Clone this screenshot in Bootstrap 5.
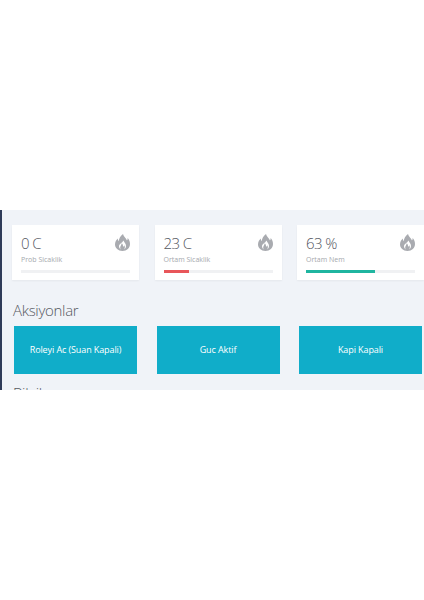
<!DOCTYPE html>
<html lang="tr">
<head>
    <meta charset="UTF-8">
    <meta name="viewport" content="width=device-width, initial-scale=1.0">
    <title>Aksiyonlar</title>
    <link href="https://cdn.jsdelivr.net/npm/bootstrap@5.3.0/dist/css/bootstrap.min.css" rel="stylesheet">
    <style>
        body {
            background: #fff;
            font-family: "Open Sans", "Liberation Sans", sans-serif;
            overflow: hidden;
        }

        .shot-panel {
            margin-top: 210px;
            height: 180px;
            overflow: hidden;
            background: #f0f3f8;
            border-left: 2px solid #2f3b59;
            padding: 15px 0 0 10px;
        }

        .stat-row {
            display: grid;
            grid-template-columns: repeat(3, 127px);
            column-gap: 15.5px;
        }

        .stat-box {
            height: 55px;
            background: #fff;
            padding: 8px 9px 0;
            box-shadow: 0 1px 2px rgba(0, 0, 0, .05);
        }

        .stat-value {
            font-size: 15px;
            font-weight: 300;
            line-height: 20px;
            letter-spacing: -.6px;
            color: #55585f;
        }

        .stat-name {
            font-size: 7px;
            line-height: 10px;
            margin-top: 2px;
            color: #a5a8ad;
        }

        .stat-flame {
            width: 15px;
            height: 17px;
            fill: #a9abb0;
            margin-top: 1px;
        }

        .stat-track {
            height: 3px;
            margin-top: 5px;
            border-radius: 0;
            background: #f0f1f3;
        }

        .fill-red { background: #e8565a; }
        .fill-green { background: #1fb5a0; }

        .block-title {
            font-size: 15px;
            font-weight: 300;
            line-height: 22px;
            letter-spacing: -.3px;
            color: #55585f;
            margin: 0;
        }

        .action-title {
            margin: 19px 0 0 1px;
        }

        .action-row {
            display: grid;
            grid-template-columns: repeat(3, 123px);
            column-gap: 19.5px;
            margin: 5px 0 0 2px;
        }

        .action-btn {
            height: 48px;
            padding: 0;
            border: 0;
            border-radius: 0;
            background: #10adc9;
            color: #fff;
            font-size: 9px;
            font-weight: 500;
            letter-spacing: -.1px;
        }

        .info-title {
            margin: 8px 0 0 1px;
        }
    </style>
</head>
<body>
    <svg class="d-none">
        <symbol id="flame" viewBox="0 0 15 17">
            <path fill-rule="evenodd" d="M8 0C8.500 2.500 11 4 12 6.500 12.600 5.800 12.800 5 12.600 4 14.200 5.600 15 7.600 15 10 15 14 11.800 17 7.500 17 3.200 17 0 14 0 10.500 0 8 1.200 6.200 2.800 4.600 2.800 5.800 3.100 6.600 3.800 7.200 3.800 4.400 5.600 1.800 8 0zM8.500 6.500C9 8.300 11 9.500 11 12 11 13.800 10 15 8.800 15.600 10 14.300 10.200 12.800 9.300 11.200 9 12 8.600 12.400 8 12.700 8.200 11.300 7.700 10 6.800 9.200 6.400 11 5 12.300 5.200 14 5.300 14.800 5.600 15.300 6.100 15.700 4.900 15.100 4 13.800 4 12.300 4 10 7.200 9 8.500 6.500z"/>
        </symbol>
    </svg>

    <div class="shot-panel">
        <div class="stat-row">
            <div class="stat-box">
                <div class="d-flex justify-content-between">
                    <div class="stat-value">0 C</div>
                    <svg class="stat-flame"><use href="#flame"/></svg>
                </div>
                <div class="stat-name">Prob Sicaklik</div>
                <div class="progress stat-track"><div class="progress-bar" style="width: 0%"></div></div>
            </div>
            <div class="stat-box">
                <div class="d-flex justify-content-between">
                    <div class="stat-value">23 C</div>
                    <svg class="stat-flame"><use href="#flame"/></svg>
                </div>
                <div class="stat-name">Ortam Sicaklik</div>
                <div class="progress stat-track"><div class="progress-bar fill-red" style="width: 23%"></div></div>
            </div>
            <div class="stat-box">
                <div class="d-flex justify-content-between">
                    <div class="stat-value">63 %</div>
                    <svg class="stat-flame"><use href="#flame"/></svg>
                </div>
                <div class="stat-name">Ortam Nem</div>
                <div class="progress stat-track"><div class="progress-bar fill-green" style="width: 63%"></div></div>
            </div>
        </div>

        <h4 class="block-title action-title">Aksiyonlar</h4>
        <div class="action-row">
            <button class="btn action-btn">Roleyi Ac (Suan Kapali)</button>
            <button class="btn action-btn">Guc Aktif</button>
            <button class="btn action-btn">Kapi Kapali</button>
        </div>

        <h4 class="block-title info-title">Bilgiler</h4>
    </div>

    <script src="https://cdn.jsdelivr.net/npm/bootstrap@5.3.0/dist/js/bootstrap.bundle.min.js"></script>
</body>
</html>
